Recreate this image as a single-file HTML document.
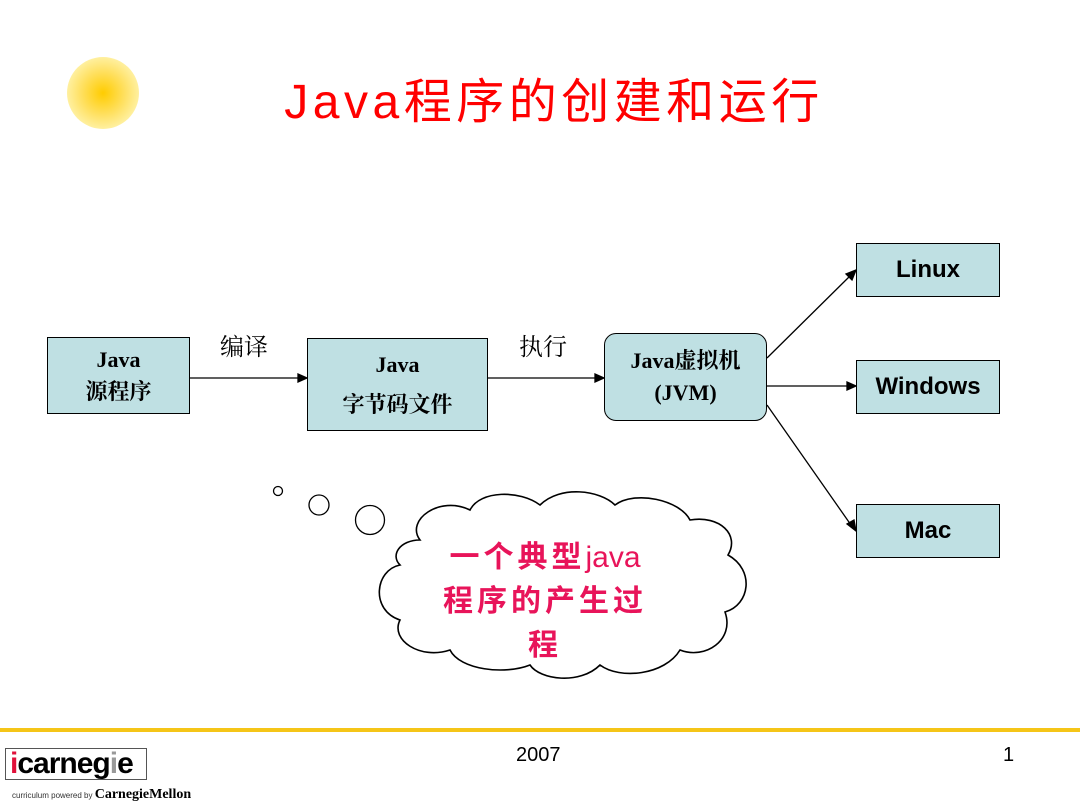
<!DOCTYPE html>
<html><head><meta charset="utf-8"><style>
body{margin:0;width:1080px;height:810px;background:#fff;position:relative;overflow:hidden;font-family:"Liberation Sans","Noto Sans CJK SC",sans-serif}
.a{position:absolute}
.box{position:absolute;background:#bfe0e3;border:1px solid #000;box-sizing:border-box;display:flex;flex-direction:column;align-items:center;justify-content:center;text-align:center}
.serif{font-family:"Liberation Serif","Noto Serif CJK SC",serif;font-weight:bold;font-size:22px;line-height:32px}
.os{font-weight:bold;font-size:24px}
</style></head><body>
<svg class="a" style="left:0;top:0" width="1080" height="810">
<defs><radialGradient id="s"><stop offset="0" stop-color="#ffcc00"/><stop offset="0.6" stop-color="#ffe060"/><stop offset="1" stop-color="#fff0a0"/></radialGradient></defs>
<circle cx="103" cy="93" r="36" fill="url(#s)"/>
<g stroke="#000" stroke-width="1.3" fill="none">
<line x1="190" y1="378" x2="300" y2="378"/><polygon points="307,378 298,374 298,382" fill="#000"/>
<line x1="488" y1="378" x2="597" y2="378"/><polygon points="604,378 595,374 595,382" fill="#000"/>
<line x1="767" y1="386" x2="849" y2="386"/><polygon points="856,386 847,382 847,390" fill="#000"/>
<line x1="767" y1="358" x2="851" y2="275"/><polygon points="856,270 846,274 852,280" fill="#000"/>
<line x1="767" y1="405" x2="851" y2="525"/><polygon points="856,531 847,524 854,520" fill="#000"/>
<circle cx="278" cy="491" r="4.5"/><circle cx="319" cy="505" r="10"/><circle cx="370" cy="520" r="14.5"/>
<path d="M420,540 C405,520 440,495 470,510 C480,490 520,490 540,505 C560,485 600,490 615,505 C635,490 680,500 690,520 C720,515 740,535 728,555 C755,570 750,605 725,612 C735,640 705,660 680,650 C665,675 620,680 600,665 C580,685 540,680 530,665 C505,675 460,670 450,650 C420,660 390,640 400,620 C370,610 375,570 400,565 C390,555 400,540 420,540 Z" fill="#fff" stroke-width="1.6"/>
</g>
<rect x="0" y="728" width="1080" height="4" fill="#f5c518"/>
</svg>
<div class="a" style="left:14px;top:62px;width:1080px;text-align:center;color:#ff0000;font-size:48px;letter-spacing:4.5px">Java程序的创建和运行</div>
<div class="box serif" style="left:47px;top:337px;width:143px;height:77px"><div>Java</div><div>源程序</div></div>
<div class="box serif" style="left:307px;top:338px;width:181px;height:93px"><div style="line-height:40px">Java</div><div style="line-height:40px">字节码文件</div></div>
<div class="box serif" style="left:604px;top:333px;width:163px;height:88px;border-radius:12px"><div>Java虚拟机</div><div>(JVM)</div></div>
<div class="a serif" style="left:220px;top:332px;font-weight:normal;font-size:24px">编译</div>
<div class="a serif" style="left:519px;top:332px;font-weight:normal;font-size:24px">执行</div>
<div class="box os" style="left:856px;top:243px;width:144px;height:54px">Linux</div>
<div class="box os" style="left:856px;top:360px;width:144px;height:54px">Windows</div>
<div class="box os" style="left:856px;top:504px;width:144px;height:54px">Mac</div>
<div class="a" style="left:420px;top:536px;width:250px;text-align:center;color:#e8145a;font-size:30px;line-height:44px;font-weight:bold;letter-spacing:4px">一个典型<span style="font-weight:normal;letter-spacing:0">java</span><br>程序的产生过<br>程</div>
<div class="a" style="left:516px;top:744px;font-size:20px">2007</div>
<div class="a" style="left:1003px;top:744px;font-size:20px">1</div>
<div class="a" style="left:5px;top:748px;width:142px;height:32px;border:1px solid #555;box-sizing:border-box;font-size:30px;font-weight:bold;line-height:30px;letter-spacing:-1px;padding-left:4px"><span style="color:#e0103a">i</span>carneg<span style="color:#999">i</span>e</div>
<div class="a" style="left:12px;top:787px;font-size:8px;color:#333">curriculum powered by <span style="font-family:'Liberation Serif',serif;font-size:14px;font-weight:bold;color:#000">CarnegieMellon</span></div>
</body></html>
